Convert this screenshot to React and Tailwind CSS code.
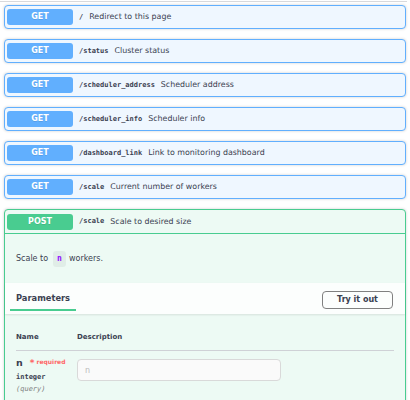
const getRoutes = [
  { path: "/", summary: "Redirect to this page" },
  { path: "/status", summary: "Cluster status" },
  { path: "/scheduler_address", summary: "Scheduler address" },
  { path: "/scheduler_info", summary: "Scheduler info" },
  { path: "/dashboard_link", summary: "Link to monitoring dashboard" },
  { path: "/scale", summary: "Current number of workers" },
];

const sans = "font-['DejaVu_Sans',sans-serif]";
const mono = "font-['DejaVu_Sans_Mono',monospace]";

const MethodBadge = ({ label, color }) => (
  <span
    className={`w-[66px] h-[16px] shrink-0 rounded-[3px] ${color} text-white font-bold text-[8px] leading-none flex items-center justify-center [text-shadow:0_1px_0_rgba(0,0,0,0.1)]`}
  >
    {label}
  </span>
);

const GetRow = ({ path, summary }) => (
  <div className="h-[24px] flex items-center pl-[2px] border border-[#61affe] rounded-[4px] bg-[#eff7ff] shadow-[0_0_3px_rgba(0,0,0,0.19)]">
    <MethodBadge label="GET" color="bg-[#61affe]" />
    <span className={`${mono} ml-[6px] text-[7px] font-bold text-[#3b4151] whitespace-nowrap`}>{path}</span>
    <span className="ml-[6px] text-[7.9px] text-[#3b4151] whitespace-nowrap">{summary}</span>
  </div>
);

export default function App() {
  return (
    <div className={`w-[410px] h-[400px] overflow-hidden bg-white ${sans}`}>
      {/* tag header border */}
      <div className="h-px mt-px mr-[3px] bg-[#d8d9dc]" />

      <div className="px-[4px] pt-[3px] flex flex-col gap-[10px]">
        {getRoutes.map((r) => (
          <GetRow key={r.path + r.summary} {...r} />
        ))}

        {/* POST /scale expanded */}
        <div className="border border-[#49cc90] rounded-[4px] bg-[#edfaf4] shadow-[0_0_3px_rgba(0,0,0,0.19)]">
          <div className="h-[24px] flex items-center pl-[2px] border-b border-[#49cc90]">
            <MethodBadge label="POST" color="bg-[#49cc90]" />
            <span className={`${mono} ml-[6px] text-[7px] font-bold text-[#3b4151]`}>/scale</span>
            <span className="ml-[6px] text-[7.9px] text-[#3b4151]">Scale to desired size</span>
          </div>

          <div className="h-[49px] flex items-center pl-[11px] text-[8px] text-[#3b4151]">
            <span>Scale to</span>
            <code
              className={`${mono} ml-[5px] mr-[3px] h-[16px] px-[4px] rounded-[3px] bg-[rgba(0,0,0,0.05)] text-[#9012fe] text-[8px] font-bold flex items-center`}
            >
              n
            </code>
            <span>workers.</span>
          </div>

          {/* Parameters header */}
          <div className="h-[31px] flex items-center justify-between pl-[11px] pr-[12px] bg-[rgba(255,255,255,0.8)] shadow-[0_1px_2px_rgba(0,0,0,0.1)]">
            <div className="relative h-full flex items-center">
              <span className="text-[8.3px] font-bold text-[#3b4151]">Parameters</span>
              <span className="absolute bottom-[3px] left-[-6px] right-[-6px] h-[2px] bg-[#49cc90]" />
            </div>
            <button className="w-[71px] h-[18px] mt-[2px] border border-[#808080] rounded-[4px] bg-transparent text-[8px] font-bold text-[#3b4151] flex items-center justify-center">
              Try it out
            </button>
          </div>

          {/* Parameters table */}
          <div className="pl-[11px] pr-[11px] pb-[12px]">
            <div className="flex pt-[18px] pb-[8px] leading-[10px] border-b border-[#cfd1d6] text-[7px] font-bold text-[#3b4151]">
              <span className="w-[61px]">Name</span>
              <span>Description</span>
            </div>
            <div className="flex items-start pt-[6px]">
              <div className="w-[61px] shrink-0 text-[#3b4151]">
                <div className="flex items-start h-[12px]">
                  <span className="text-[9.5px] font-bold leading-[12px]">n</span>
                  <span className="ml-[7px] mt-[1px] text-[9px] font-bold leading-[10px] text-[#ff6666]">*</span>
                  <span className="ml-[2px] mt-[1px] text-[6px] font-bold leading-[8px] text-[#ff6666]">required</span>
                </div>
                <div className={`${mono} mt-[3px] text-[7px] font-bold leading-[10px]`}>integer</div>
                <div className={`${mono} mt-[2px] text-[7px] italic leading-[10px] text-[#808080]`}>(query)</div>
              </div>
              <input
                placeholder="n"
                className="mt-[2px] w-[204px] h-[22px] px-[7px] border border-[#d9d9d9] rounded-[4px] bg-[#fafafa] text-[8px] text-[#3b4151] placeholder:text-[#bcbcbc] outline-none"
              />
            </div>
          </div>
        </div>
      </div>
    </div>
  );
}
